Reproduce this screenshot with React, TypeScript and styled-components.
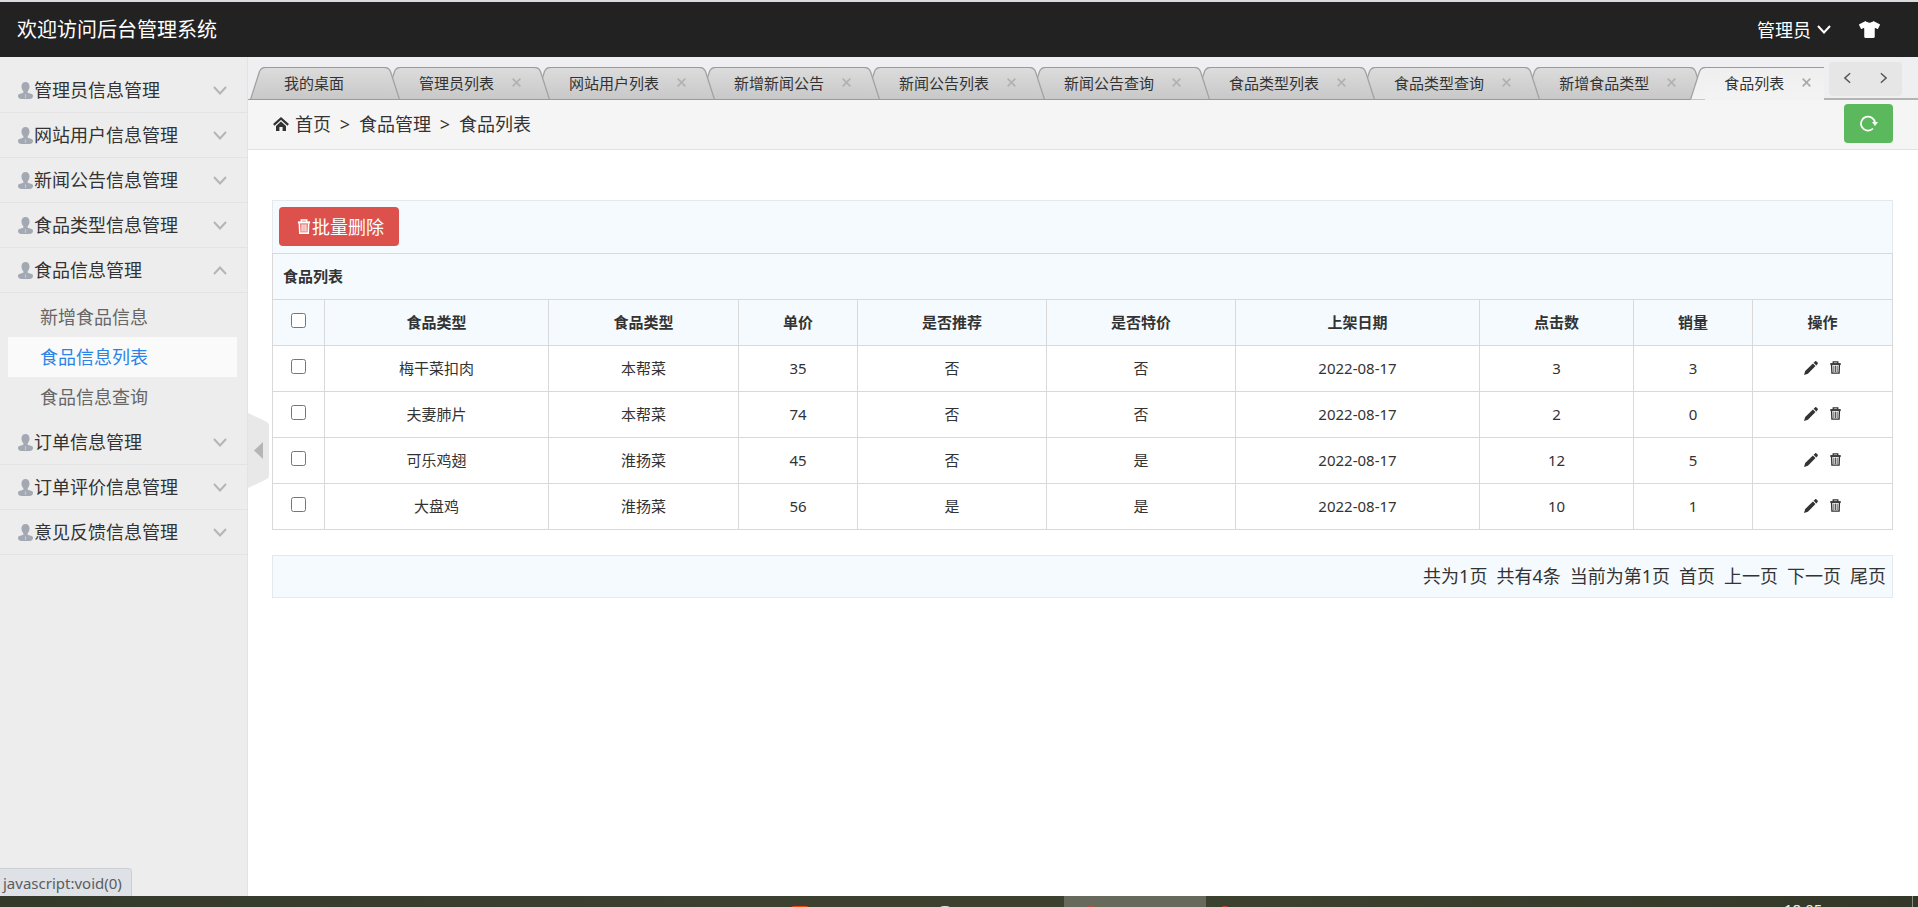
import React, { useState } from "react";
import styled, { createGlobalStyle } from "styled-components";
import { FaTshirt } from "react-icons/fa";

const GlobalStyle = createGlobalStyle`
  *, *::before, *::after { box-sizing: border-box; }
  body {
    margin: 0;
    background: #fff;
    color: #333;
    font: 15px/24px "Noto Sans", "Noto Sans CJK SC", sans-serif;
  }
  a { color: inherit; text-decoration: none; }
  button { font: inherit; color: inherit; border: 0; padding: 0; background: none; cursor: pointer; }
  svg { display: block; flex: none; }
  ul { list-style: none; margin: 0; padding: 0; }
`;

const Page = styled.div`
  min-height: 100vh;
  display: flex;
  flex-direction: column;
  position: relative;
`;

const Header = styled.header`
  height: 57px;
  flex: none;
  display: flex;
  align-items: center;
  justify-content: space-between;
  padding: 0 34px 0 17px;
  background: #222;
  border-top: 2px solid #d9dcde;
  color: #fff;
`;

const Brand = styled.a`
  font-size: 20px;
`;

const HeaderTools = styled.div`
  display: flex;
  align-items: center;
  gap: 24px;
`;

const UserButton = styled.button`
  display: flex;
  align-items: center;
  gap: 6px;
  font-size: 18px;
`;

const ToolButton = styled.button`
  display: flex;
  padding: 0 4px;
`;

const Body = styled.div`
  flex: 1;
  display: flex;
  min-height: 0;
`;

const Sidebar = styled.aside`
  position: relative;
  width: 248px;
  flex: none;
  padding-top: 11px;
  background: #ededed;
  border-right: 1px solid #e3e3e3;
`;

const MenuHeader = styled.button`
  display: flex;
  align-items: center;
  gap: 1px;
  width: 100%;
  height: 45px;
  padding: 0 20px 0 18px;
  border-bottom: 1px solid #e3e3e3;
  font-size: 18px;
  text-align: left;
  svg:last-child { margin-left: auto; }
`;

const SubMenu = styled.ul`
  padding: 4px 10px 3px 8px;
`;

const SubLink = styled.a<{ $active: boolean }>`
  display: block;
  height: 40px;
  padding-left: 32px;
  line-height: 40px;
  font-size: 18px;
  color: ${(p) => (p.$active ? "#2a83e6" : "#666")};
  background: ${(p) => (p.$active ? "#fafafa" : "transparent")};
`;

const CollapseHandle = styled.button`
  position: absolute;
  left: 248px;
  top: 50%;
  margin-top: -64px;
`;

const StatusBubble = styled.div`
  position: absolute;
  left: 0;
  bottom: 0;
  height: 28px;
  padding: 0 9px 0 3px;
  background: #dee1e6;
  border: 1px solid #ccd0d4;
  border-width: 1px 1px 0 0;
  border-top-right-radius: 4px;
  line-height: 28px;
  font-size: 15px;
  color: #5a5c60;
`;

const Main = styled.main`
  flex: 1;
  min-width: 0;
`;

const TabBar = styled.nav`
  display: flex;
  height: 43px;
  background: #efeef0;
`;

const TabStrip = styled.div`
  flex: 1;
  min-width: 0;
  display: flex;
  align-items: flex-end;
  padding-left: 2px;
  overflow: hidden;
  background: linear-gradient(#9e9e9e, #9e9e9e) left bottom / 16px 1px no-repeat;
`;

const TabItem = styled.div<{ $z: number }>`
  display: flex;
  flex: none;
  height: 33px;
  margin-right: -15px;
  position: relative;
  z-index: ${(p) => p.$z};
`;

const TabBody = styled.div<{ $active: boolean; $closable: boolean }>`
  display: flex;
  align-items: center;
  padding: 0 ${(p) => (p.$closable ? 14 : 41)}px 2px 19px;
  border-top: 1px solid #9a9a9a;
  border-bottom: 1px solid ${(p) => (p.$active ? "#f3f3f3" : "#9a9a9a")};
  background: ${(p) => (p.$active ? "linear-gradient(#efefef, #f3f3f3)" : "linear-gradient(#dcdcdc, #c8c8c8)")};
  white-space: nowrap;
`;

const CloseButton = styled.button<{ $active: boolean }>`
  display: flex;
  margin-left: 18px;
  color: ${(p) => (p.$active ? "#aaa" : "#b2b2b2")};
`;

const TabScroll = styled.div`
  width: 94px;
  flex: none;
  padding: 5px 0 0 5px;
  border-bottom: 2px solid #b4b4b4;
`;

const ScrollGroup = styled.div`
  display: flex;
  justify-content: space-between;
  align-items: center;
  width: 73px;
  height: 34px;
  padding: 0 15px 2px;
  border-radius: 4px;
  background: #e6e6e6;
  color: #555;
`;

const Breadcrumb = styled.div`
  display: flex;
  align-items: center;
  height: 50px;
  padding: 0 25px 2px;
  background: #f5f5f5;
  border-bottom: 1px solid #e2e2e2;
  font-size: 18px;
  svg { margin-right: 6px; }
`;

const Separator = styled.span`
  width: 28px;
  text-align: center;
`;

const RefreshButton = styled.button`
  display: grid;
  place-items: center;
  width: 49px;
  height: 39px;
  margin-left: auto;
  border-radius: 4px;
  background: #5cb85c;
  color: #fff;
  svg { margin: 0; }
`;

const Content = styled.section`
  padding: 50px 25px 0 24px;
`;

const Toolbar = styled.div`
  height: 53px;
  padding: 6px;
  background: #f5fafe;
  border: 1px solid #e5e9ec;
  border-bottom: 0;
`;

const DeleteButton = styled.button`
  display: flex;
  align-items: center;
  height: 39px;
  padding: 0 15px 0 18px;
  gap: 1px;
  border-radius: 4px;
  background: #dd514c;
  color: #fff;
  font-size: 18px;
`;

const Table = styled.table`
  width: 100%;
  table-layout: fixed;
  border-collapse: collapse;
  text-align: center;
  th, td { height: 46px; padding: 0 10px 2px; border: 1px solid #d9d9d9; }
  thead th { background: #f5fafe; font-weight: 700; }
  thead tr:first-child th { text-align: left; }
  input { display: block; width: 15px; height: 15px; margin: 0 auto 2px; }
`;

const Actions = styled.div`
  display: flex;
  align-items: center;
  justify-content: center;
  gap: 12px;
`;

const Pager = styled.div`
  display: flex;
  justify-content: flex-end;
  align-items: center;
  gap: 9px;
  height: 43px;
  margin-top: 25px;
  padding: 0 6px 2px;
  background: #f5fafe;
  border: 1px solid #e5e9ec;
  font-size: 18px;
`;

const Taskbar = styled.footer`
  position: relative;
  height: 11px;
  flex: none;
  overflow: hidden;
  background: linear-gradient(90deg, #343a2a, #3c4030 40%, #3c402f 65%, #333828);
  display: grid;
  grid-template-columns: 1064fr 142fr 578fr 134fr;
`;

const TaskSlot = styled.div<{ $active?: boolean }>`
  position: relative;
  min-width: 0;
  background: ${(p) => (p.$active ? "#66695c" : "transparent")};
`;

const TaskIcon = styled.span<{ $left: number; $w: number; $color: string }>`
  position: absolute;
  top: 10px;
  left: ${(p) => p.$left}%;
  width: ${(p) => p.$w}px;
  height: 20px;
  border-radius: 8px;
  background: ${(p) => p.$color};
`;

const Clock = styled.time`
  display: block;
  padding-top: 3px;
  font-size: 15px;
  line-height: 20px;
  color: #eee;
  border-right: 1px solid #8a8c82;
  margin-right: 5px;
`;

const UserIcon = () => (
  <svg width="15" height="17" viewBox="0 0 16 18" fill="#a3a9b2" aria-hidden="true">
    <path d="M8 0c2.700 0 4.300 1.900 4.300 4.800 0 2.300-.9 4-2 5v1.700l4.200 1.200c1 .4 1.500 1.100 1.500 2.200 0 2-1.500 3.100-4 3.100H4c-2.500 0-4-1.100-4-3.100 0-1.100.5-1.800 1.500-2.200l4.200-1.200V9.800c-1.100-1-2-2.700-2-5C3.700 1.900 5.300 0 8 0z" />
    <path d="M8 13v4" stroke="#c3c7cd" strokeWidth="1.300" />
  </svg>
);

const Chevron = ({ up, color = "#b5b5b5" }: { up?: boolean; color?: string }) => (
  <svg width="14" height="9" viewBox="0 0 14 9" fill="none" stroke={color} strokeWidth="2" aria-hidden="true">
    <path d={up ? "M1 8l6-6.500L13 8" : "M1 1l6 6.500L13 1"} />
  </svg>
);

const SideArrow = ({ right }: { right?: boolean }) => (
  <svg width="7" height="12" viewBox="0 0 8 13" fill="none" stroke="currentColor" strokeWidth="1.600" aria-hidden="true">
    <path d={right ? "M1 1l6 5.500L1 12" : "M7 1L1 6.500 7 12"} />
  </svg>
);

const HomeIcon = () => (
  <svg width="16" height="14" viewBox="0 0 16 14" aria-hidden="true">
    <path d="M.8 7.800L8 1.500l7.200 6.300" fill="none" stroke="#333" strokeWidth="2.200" />
    <path d="M8 4.600l5 4.400V14H9.600v-4H6.400v4H3V9z" fill="#333" />
  </svg>
);

const RefreshIcon = () => (
  <svg width="18" height="17" viewBox="0 0 18 17" aria-hidden="true">
    <path d="M13 13.500A7 7 0 1 1 15 8" fill="none" stroke="currentColor" strokeWidth="1.700" />
    <path d="M12 7h6l-3 4z" fill="currentColor" />
  </svg>
);

const TrashIcon = ({ w, h, filled }: { w: number; h: number; filled?: boolean }) => (
  <svg width={w} height={h} viewBox="0 0 12 14" fill="none" stroke="currentColor" aria-hidden="true">
    <path d="M.3 3.200h11.400" strokeWidth="2" />
    <path d="M3.500 2.500V.9h5v1.600" strokeWidth="1.400" />
    <path d="M1.700 4l.4 9.200h7.800l.4-9.200" strokeWidth="1.500" />
    <path d="M4.200 5v7M6 5v7M7.800 5v7" strokeWidth={filled ? "1.200" : "0.900"} />
  </svg>
);

const PencilIcon = () => (
  <svg width="14" height="14" viewBox="0 0 14 14" fill="currentColor" aria-hidden="true">
    <path d="M0 14l1.200-3.900 7.700-7.600 2.600 2.600-7.600 7.700z" />
    <path d="M9.600 1.700L11 .4c.5-.4 1-.4 1.500 0l1.100 1.100c.4.500.4 1 0 1.500l-1.300 1.400z" />
  </svg>
);

const CloseIcon = () => (
  <svg width="9" height="9" viewBox="0 0 9 9" stroke="currentColor" strokeWidth="1.700" aria-hidden="true">
    <path d="M.7.7l7.600 7.600M8.300.7L.7 8.300" />
  </svg>
);

const TabEdge = ({ right, active, id }: { right?: boolean; active: boolean; id: string }) => (
  <svg width="15" height="33" viewBox="0 0 15 33" aria-hidden="true">
    <defs>
      <linearGradient id={id} x1="0" y1="0" x2="0" y2="1">
        <stop offset="0" stopColor={active ? "#efefef" : "#dcdcdc"} />
        <stop offset="1" stopColor={active ? "#f3f3f3" : "#c8c8c8"} />
      </linearGradient>
    </defs>
    <g transform={right ? "translate(15 0) scale(-1 1)" : undefined}>
      <path d="M15 .5C12 .5 10.500 2 9.500 4.500L.5 32.500H15z" fill={`url(#${id})`} />
      <path d="M15 .5C12 .5 10.500 2 9.500 4.500L.5 32.500" fill="none" stroke="#a2a2a2" strokeWidth="1.300" />
      {!active && <path d="M0 32.500h15" stroke="#9a9a9a" />}
    </g>
  </svg>
);

const menus = [
  "管理员信息管理",
  "网站用户信息管理",
  "新闻公告信息管理",
  "食品类型信息管理",
  "食品信息管理",
  "订单信息管理",
  "订单评价信息管理",
  "意见反馈信息管理",
];
const subItems = ["新增食品信息", "食品信息列表", "食品信息查询"];
const tabs = [
  "我的桌面",
  "管理员列表",
  "网站用户列表",
  "新增新闻公告",
  "新闻公告列表",
  "新闻公告查询",
  "食品类型列表",
  "食品类型查询",
  "新增食品类型",
  "食品列表",
];
const columns: [string, number][] = [
  ["食品类型", 224],
  ["食品类型", 190],
  ["单价", 119],
  ["是否推荐", 189],
  ["是否特价", 189],
  ["上架日期", 244],
  ["点击数", 154],
  ["销量", 119],
  ["操作", 140],
];
const rows = [
  ["梅干菜扣肉", "本帮菜", "35", "否", "否", "2022-08-17", "3", "3"],
  ["夫妻肺片", "本帮菜", "74", "否", "否", "2022-08-17", "2", "0"],
  ["可乐鸡翅", "淮扬菜", "45", "否", "是", "2022-08-17", "12", "5"],
  ["大盘鸡", "淮扬菜", "56", "是", "是", "2022-08-17", "10", "1"],
];

const Col = styled.col<{ $w: number }>`
  width: ${(p) => p.$w}px;
`;

export default function App() {
  const [open, setOpen] = useState("食品信息管理");
  const [checked, setChecked] = useState<boolean[]>(rows.map(() => false));
  const current = tabs.length - 1;

  return (
    <Page>
      <GlobalStyle />
      <Header>
        <Brand href="#">欢迎访问后台管理系统</Brand>
        <HeaderTools>
          <UserButton>
            管理员
            <Chevron color="#fff" />
          </UserButton>
          <ToolButton aria-label="换肤">
            <FaTshirt size={21} />
          </ToolButton>
        </HeaderTools>
      </Header>
      <Body>
        <Sidebar>
          {menus.map((name) => (
            <React.Fragment key={name}>
              <MenuHeader onClick={() => setOpen(open === name ? "" : name)} aria-expanded={open === name}>
                <UserIcon />
                {name}
                <Chevron up={open === name} />
              </MenuHeader>
              {name === "食品信息管理" && open === name && (
                <SubMenu>
                  {subItems.map((item) => (
                    <li key={item}>
                      <SubLink href="#" $active={item === "食品信息列表"}>
                        {item}
                      </SubLink>
                    </li>
                  ))}
                </SubMenu>
              )}
            </React.Fragment>
          ))}
          <CollapseHandle aria-label="收起菜单">
            <svg width="21" height="75" viewBox="0 0 21 75" aria-hidden="true">
              <path d="M0 0l18 8.500q3 1.500 3 4.500v49q0 3-3 4.500L0 75z" fill="#e8e8e8" />
              <path d="M6 37.500l9-8.500v17z" fill="#b5b5b5" />
            </svg>
          </CollapseHandle>
          <StatusBubble>javascript:void(0)</StatusBubble>
        </Sidebar>
        <Main>
          <TabBar>
            <TabStrip>
              {tabs.map((name, i) => {
                const active = i === current;
                return (
                  <TabItem key={name} $z={active ? tabs.length + 1 : tabs.length - i}>
                    <TabEdge id={`tab-l-${i}`} active={active} />
                    <TabBody $active={active} $closable={i > 0}>
                      {name}
                      {i > 0 && (
                        <CloseButton $active={active} aria-label={`关闭${name}`}>
                          <CloseIcon />
                        </CloseButton>
                      )}
                    </TabBody>
                    <TabEdge right id={`tab-r-${i}`} active={active} />
                  </TabItem>
                );
              })}
            </TabStrip>
            <TabScroll>
              <ScrollGroup>
                <button aria-label="向左">
                  <SideArrow />
                </button>
                <button aria-label="向右">
                  <SideArrow right />
                </button>
              </ScrollGroup>
            </TabScroll>
          </TabBar>
          <Breadcrumb>
            <HomeIcon />
            <a href="#">首页</a>
            <Separator>&gt;</Separator>
            <span>食品管理</span>
            <Separator>&gt;</Separator>
            <span>食品列表</span>
            <RefreshButton aria-label="刷新">
              <RefreshIcon />
            </RefreshButton>
          </Breadcrumb>
          <Content>
            <Toolbar>
              <DeleteButton>
                <TrashIcon w={14} h={15} filled />
                批量删除
              </DeleteButton>
            </Toolbar>
            <Table>
              <colgroup>
                <Col $w={52} />
                {columns.map(([, w], i) => (
                  <Col key={i} $w={w} />
                ))}
              </colgroup>
              <thead>
                <tr>
                  <th colSpan={10}>食品列表</th>
                </tr>
                <tr>
                  <th>
                    <input
                      type="checkbox"
                      aria-label="全选"
                      checked={checked.every(Boolean)}
                      onChange={(e) => setChecked(rows.map(() => e.target.checked))}
                    />
                  </th>
                  {columns.map(([name], i) => (
                    <th key={i}>{name}</th>
                  ))}
                </tr>
              </thead>
              <tbody>
                {rows.map((row, r) => (
                  <tr key={row[0]}>
                    <td>
                      <input
                        type="checkbox"
                        aria-label={row[0]}
                        checked={checked[r]}
                        onChange={() => setChecked(checked.map((c, i) => (i === r ? !c : c)))}
                      />
                    </td>
                    {row.map((cell, i) => (
                      <td key={i}>{cell}</td>
                    ))}
                    <td>
                      <Actions>
                        <a href="#" aria-label="编辑">
                          <PencilIcon />
                        </a>
                        <a href="#" aria-label="删除">
                          <TrashIcon w={11} h={13} />
                        </a>
                      </Actions>
                    </td>
                  </tr>
                ))}
              </tbody>
            </Table>
            <Pager>
              <span>共为1页</span>
              <span>共有4条</span>
              <span>当前为第1页</span>
              <a href="#">首页</a>
              <a href="#">上一页</a>
              <a href="#">下一页</a>
              <a href="#">尾页</a>
            </Pager>
          </Content>
        </Main>
      </Body>
      <Taskbar>
        <TaskSlot>
          <TaskIcon $left={74} $w={26} $color="#f04a10" />
          <TaskIcon $left={88} $w={18} $color="#ddd" />
        </TaskSlot>
        <TaskSlot $active>
          <TaskIcon $left={14} $w={14} $color="#d0473c" />
        </TaskSlot>
        <TaskSlot>
          <TaskIcon $left={2} $w={14} $color="#d0403c" />
        </TaskSlot>
        <Clock>18:05</Clock>
      </Taskbar>
    </Page>
  );
}
